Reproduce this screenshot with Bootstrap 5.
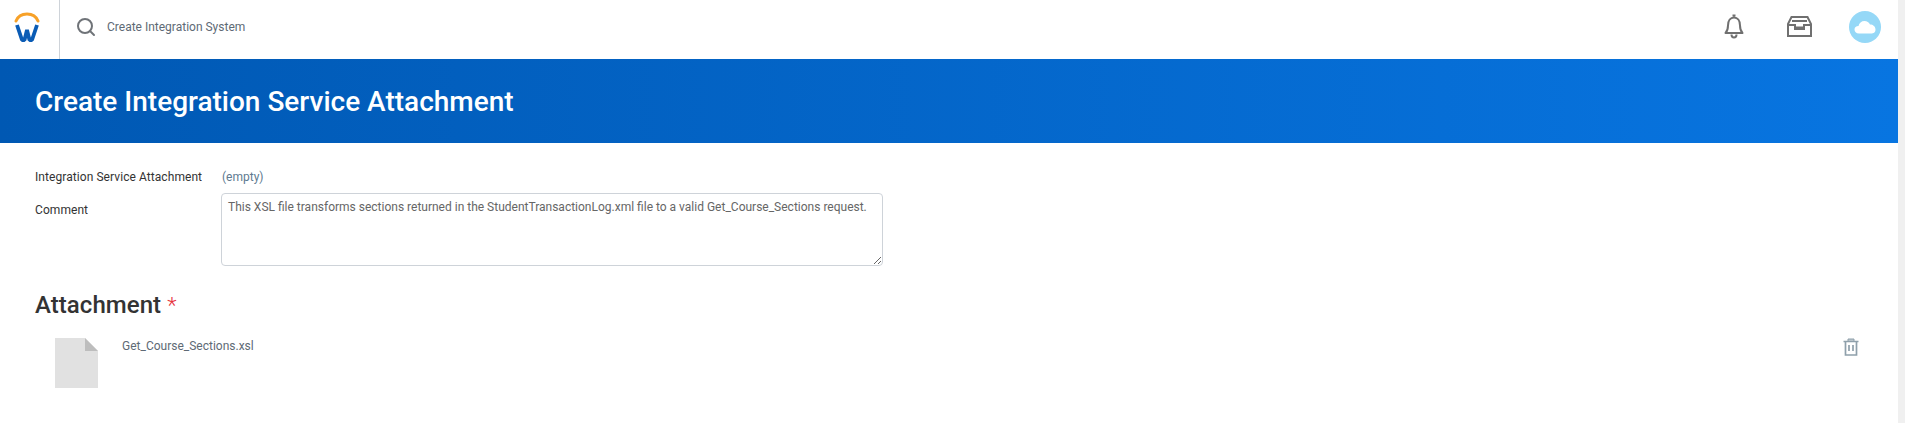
<!DOCTYPE html>
<html lang="en"><head><meta charset="utf-8"><title>Create Integration Service Attachment</title>
<link href="https://cdn.jsdelivr.net/npm/bootstrap@5.3.0/dist/css/bootstrap.min.css" rel="stylesheet">
<style>
html,body{height:100%;overflow:hidden}
body{font-family:Roboto,"Liberation Sans",sans-serif;background:#fff;color:#333;font-size:12px}
.shell{height:423px;border-right:7px solid #f0f0f0}
.topbar{height:59px;padding-bottom:6px}
.logo-cell{width:60px;height:59px;margin-bottom:-6px;padding:0 6px 6px 0;border-right:1px solid #ced3d9}
.search-cell{padding-left:16px;gap:11px;color:#5e6a75;font-size:12px}
.tool-icons{padding-right:17px}
.bell-icon{margin-right:43px}
.tray-icon{margin-right:37px}
.avatar{width:32px;height:32px;border-radius:50%;background:#95d8f7}
.banner{height:84px;padding:2px 0 0 35px;background:linear-gradient(90deg,#0058b3,#0875e1)}
.banner h1{font-size:28px;font-weight:500;margin:0;color:#fff}
.form-area{padding:26px 35px 0}
.field-label{width:187px;flex:none;color:#333;font-size:12px;line-height:16px;letter-spacing:.07px}
.empty-val{color:#5e7a90;font-size:12px;line-height:16px}
.note{width:662px;height:73px;padding:4px 6px;border:1px solid #ced3d9;border-radius:4px;font-size:12px;line-height:18px;color:#666;display:block;font-family:inherit;margin-left:-1px}
.comment-label{padding-top:9px}
.sect-title{font-size:24px;font-weight:500;line-height:28px;margin:25px 0 0;color:#333;letter-spacing:.05px}
.req{color:#e6323c;font-weight:300;font-size:22px}
.file-row{padding-left:20px;margin-top:18px;margin-right:4px}
.file-name{color:#5e6a75;font-size:12px;line-height:16px;margin-left:24px}
</style></head><body>
<div class="shell d-flex flex-column">
<header class="topbar d-flex align-items-center">
<div class="logo-cell d-flex align-items-center justify-content-center">
<svg width="26" height="30" viewBox="0 0 26 30"><path d="M2 9C4 4 8 2 13 2s9 2 11 7" fill="none" stroke="#f7a128" stroke-width="3" stroke-linecap="round"/><path d="M3 13l5 15h2.500L13 18l2.500 10H18l5-15" fill="none" stroke="#0b5cb5" stroke-width="3.800" stroke-linejoin="bevel"/></svg>
</div>
<div class="search-cell d-flex align-items-center">
<svg width="20" height="20" viewBox="0 0 20 20"><circle cx="9" cy="9" r="7" fill="none" stroke="#6f7378" stroke-width="2"/><path d="M14 14l4 4" stroke="#6f7378" stroke-width="2" stroke-linecap="round"/></svg>
<span>Create Integration System</span>
</div>
<div class="tool-icons d-flex align-items-center ms-auto">
<svg class="bell-icon" width="20" height="26" viewBox="0 0 20 26"><path d="M1.500 19c2-2 2.500-3.500 2.500-7.500C4 6.500 6.500 3.500 10 3.500s6 3 6 8c0 4 .5 5.500 2.500 7.500zM8.500 1.500h3M7.500 20.500c0 4 5 4 5 0" fill="none" stroke="#707070" stroke-width="2" stroke-linejoin="round"/></svg>
<svg class="tray-icon" width="25" height="21" viewBox="0 0 25 21"><path d="M1 8L4.500 1h16L24 8v12H1zM1 9h7v4h9V9h7M9 11.500h7M5 5h15" fill="none" stroke="#707070" stroke-width="2"/></svg>
<div class="avatar d-flex align-items-center justify-content-center">
<svg width="22" height="14" viewBox="0 0 22 14"><path d="M5 13.500C2 13.500.5 11.500.5 9.500S2 6 4.500 6C5 3 7.500 1 10.500 1c2.500 0 4.500 1.500 5.500 3.500 3 0 5.500 2 5.500 5s-2 4-4.500 4z" fill="#fff"/></svg>
</div>
</div>
</header>
<section class="banner d-flex align-items-center"><h1>Create Integration Service Attachment</h1></section>
<main class="form-area">
<div class="d-flex mb-2"><div class="field-label">Integration Service Attachment</div><div class="empty-val">(empty)</div></div>
<div class="d-flex"><div class="field-label comment-label">Comment</div>
<textarea class="note" readonly>This XSL file transforms sections returned in the StudentTransactionLog.xml file to a valid Get_Course_Sections request.</textarea></div>
<h2 class="sect-title">Attachment <span class="req">*</span></h2>
<div class="file-row d-flex align-items-start">
<svg width="43" height="50" viewBox="0 0 43 50"><path d="M0 0h30l13 13v37H0z" fill="#e1e1e1"/><path d="M30 0l13 13H30z" fill="#bdbdbd"/></svg>
<div class="file-name">Get_Course_Sections.xsl</div>
<svg class="ms-auto" width="16" height="18" viewBox="0 0 16 18"><path d="M.5 3.500h15" stroke="#8fa0ab" stroke-width="1.500"/><path d="M5 3V1h6v2" fill="#b9c4cb" stroke="#8fa0ab"/><path d="M2.500 4v13h11V4M6 7v6M10 7v6" fill="none" stroke="#8fa0ab" stroke-width="1.700"/></svg>
</div>
</main>
</div>
</body></html>
